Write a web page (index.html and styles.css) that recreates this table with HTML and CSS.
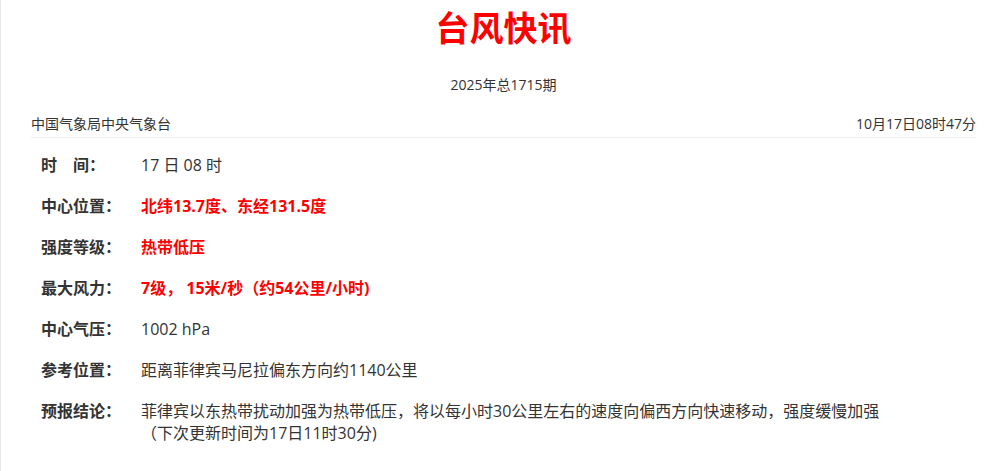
FILE: index.html
```html
<!DOCTYPE html>
<html lang="zh-CN">
<head>
<meta charset="UTF-8" />
<meta name="viewport" content="width=device-width, initial-scale=1" />
<title>台风快讯</title>
<link rel="stylesheet" href="styles.css">
</head>
<body>

<div class="page">
  <h1 class="title">台风快讯</h1>
  <div class="issue">2025年总1715期</div>

  <div class="meta">
    <span>中国气象局中央气象台</span>
    <span>10月17日08时47分</span>
  </div>

  <div class="report">
    <div class="row">
      <div class="label">时　间：</div>
      <div class="value">17 日 08 时</div>
    </div>
    <div class="row">
      <div class="label">中心位置：</div>
      <div class="value hot">北纬13.7度、东经131.5度</div>
    </div>
    <div class="row">
      <div class="label">强度等级：</div>
      <div class="value hot">热带低压</div>
    </div>
    <div class="row">
      <div class="label">最大风力：</div>
      <div class="value hot">7级， 15米/秒（约54公里/小时)</div>
    </div>
    <div class="row">
      <div class="label">中心气压：</div>
      <div class="value">1002 hPa</div>
    </div>
    <div class="row">
      <div class="label">参考位置：</div>
      <div class="value">距离菲律宾马尼拉偏东方向约1140公里</div>
    </div>
    <div class="row">
      <div class="label">预报结论：</div>
      <div class="value">
        <p class="line">菲律宾以东热带扰动加强为热带低压，将以每小时30公里左右的速度向偏西方向快速移动，强度缓慢加强</p>
        <p class="line">（下次更新时间为17日11时30分)</p>
      </div>
    </div>
  </div>
</div>

</body>
</html>
```

FILE: styles.css
```css
body {
  margin: 0;
  padding: 0;
  background-color: #fff;
  color: #333;
  font-family: "Open Sans", "Noto Sans CJK SC", sans-serif;
}

.page {
  min-height: 100vh;
  box-sizing: border-box;
  border-left: 1px solid #e6e6e6;
  padding: 8px 26px 0 30px;
}

.title {
  margin: 0;
  text-align: center;
  font-size: 34px;
  line-height: 40px;
  font-weight: 700;
  color: #ff0000;
}

.issue {
  margin-top: 27px;
  text-align: center;
  font-size: 14px;
  line-height: 20px;
}

.meta {
  display: flex;
  justify-content: space-between;
  margin-top: 19px;
  padding-bottom: 3px;
  border-bottom: 1px solid #eee;
  font-size: 14px;
  line-height: 20px;
}

.report {
  padding: 16px 0 0 10px;
  display: flex;
  flex-direction: column;
  gap: 19px;
}

.row {
  display: flex;
  font-size: 16px;
  line-height: 22px;
}

.label {
  width: 100px;
  flex-shrink: 0;
  font-weight: 700;
}

.value.hot {
  color: #ff0000;
  font-weight: 700;
}

.line {
  margin: 0;
  height: 22px;
}
```
